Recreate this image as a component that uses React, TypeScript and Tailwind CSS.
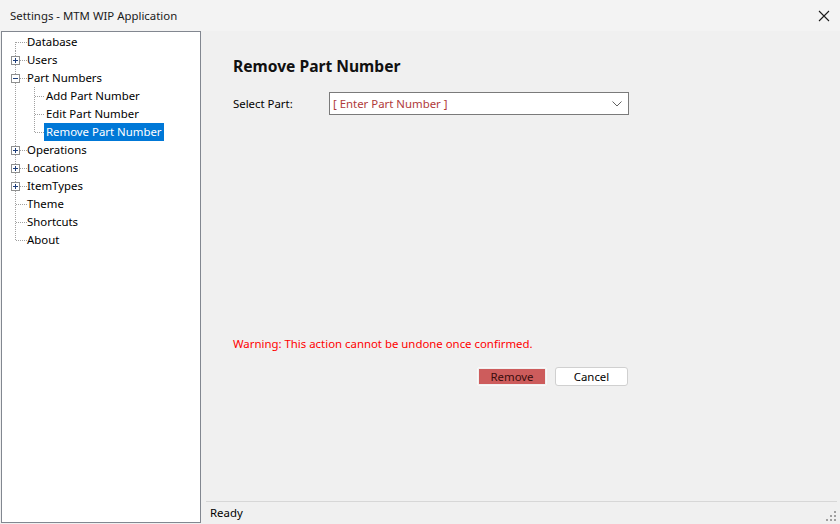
import React from "react";

type TreeNode = {
  label: string;
  level: 0 | 1;
  box?: "plus" | "minus";
  selected?: boolean;
  first?: boolean;
  last?: boolean;
  childLine?: "start" | "mid" | "end";
};

const nodes: TreeNode[] = [
  { label: "Database", level: 0, first: true },
  { label: "Users", level: 0, box: "plus" },
  { label: "Part Numbers", level: 0, box: "minus" },
  { label: "Add Part Number", level: 1, childLine: "start" },
  { label: "Edit Part Number", level: 1, childLine: "mid" },
  { label: "Remove Part Number", level: 1, childLine: "end", selected: true },
  { label: "Operations", level: 0, box: "plus" },
  { label: "Locations", level: 0, box: "plus" },
  { label: "ItemTypes", level: 0, box: "plus" },
  { label: "Theme", level: 0 },
  { label: "Shortcuts", level: 0 },
  { label: "About", level: 0, last: true },
];

const dot = { stroke: "#a0a0a0", strokeWidth: 1, strokeDasharray: "1 1" };

function Connector({ node }: { node: TreeNode }) {
  const width = node.level === 0 ? 25 : 42;
  return (
    <svg width={width} height={18} className="shrink-0">
      {/* level 0 trunk */}
      <line
        x1={13.5}
        x2={13.5}
        y1={node.first ? 9 : 0}
        y2={node.last ? 10 : 18}
        {...dot}
      />
      {node.level === 0 && (
        <line x1={14} x2={25} y1={9.5} y2={9.5} {...dot} />
      )}
      {node.level === 1 && (
        <>
          <line
            x1={32.5}
            x2={32.5}
            y1={0}
            y2={node.childLine === "end" ? 10 : 18}
            {...dot}
          />
          <line x1={33} x2={42} y1={9.5} y2={9.5} {...dot} />
        </>
      )}
      {node.box && (
        <g>
          <rect x={9.5} y={5.5} width={8} height={8} fill="#fff" stroke="#8e8f8f" />
          <line x1={11} x2={16} y1={9.5} y2={9.5} stroke="#1f3f7a" />
          {node.box === "plus" && (
            <line x1={13.5} x2={13.5} y1={7} y2={12} stroke="#1f3f7a" />
          )}
        </g>
      )}
    </svg>
  );
}

function TreeRow({ node }: { node: TreeNode }) {
  let cls = "h-[18px] leading-[18px] text-black";
  if (node.selected) cls = "px-[2px] h-[18px] leading-[18px] bg-[#0078d7] text-white";
  else if (node.level === 1) cls = "ml-[2px] h-[18px] leading-[18px] text-black";
  return (
    <div className="flex h-[18px] items-center">
      <Connector node={node} />
      <span className={cls}>{node.label}</span>
    </div>
  );
}

export default function App() {
  return (
    <div
      className="w-[840px] h-[524px] bg-[#f0f0f0] flex flex-col overflow-hidden text-[11.4px] text-black"
      style={{ fontFamily: '"Noto Sans", "Open Sans", sans-serif' }}
    >
      {/* title bar */}
      <div className="h-[31px] bg-[#f3f3f3] flex items-center justify-between shrink-0">
        <span className="pl-[10px] text-[#1a1a1a]">Settings - MTM WIP Application</span>
        <svg width={12} height={12} className="mr-[10px]">
          <path d="M1 1 L11 11 M11 1 L1 11" stroke="#1a1a1a" strokeWidth={1.1} />
        </svg>
      </div>

      <div className="flex flex-1 min-h-0">
        {/* settings tree */}
        <div className="ml-[1px] w-[200px] h-[492px] bg-white border border-[#828790] pt-[1px] shrink-0">
          {nodes.map((node) => (
            <TreeRow key={node.label} node={node} />
          ))}
        </div>

        <div className="flex flex-col flex-1 min-w-0">
          {/* remove part panel */}
          <div className="flex-1 pl-[32px] pt-[25px]">
            <h1 className="text-[15.6px] leading-[20px] font-bold text-[#111]">
              Remove Part Number
            </h1>

            <div className="mt-[16px] flex items-center h-[23px]">
              <span className="w-[96px]">Select Part:</span>
              <div className="w-[300px] h-[23px] bg-white border border-[#7a7a7a] flex items-center justify-between pl-[3px] pr-[6px]">
                <span className="text-[#b03a3a]">[ Enter Part Number ]</span>
                <svg width={10} height={6}>
                  <path d="M0.5 0.5 L5 5 L9.5 0.5" fill="none" stroke="#606060" />
                </svg>
              </div>
            </div>

            <p className="mt-[220px] leading-[17px] text-[#ff0000]">
              Warning: This action cannot be undone once confirmed.
            </p>

            <div className="mt-[15px] w-[395px] flex justify-end gap-[8px]">
              <div className="w-[70px] h-[19px] border border-[#f9f9f9] rounded-[2px] p-[1px]">
                <div className="h-full bg-[#cd5c5c] text-[#3a0d0d] flex items-center justify-center">
                  Remove
                </div>
              </div>
              <div className="w-[73px] h-[19px] bg-white border border-[#d0d0d0] rounded-[3px] flex items-center justify-center">
                Cancel
              </div>
            </div>
          </div>

          {/* status bar */}
          <div className="ml-[5px] mr-[3px] h-[23px] border-t border-[#d7d7d7] flex items-center justify-between shrink-0">
            <span className="pl-[4px]">Ready</span>
            <svg width={12} height={12} className="mt-[8px]">
              <rect x={9} y={0} width={2} height={2} fill="#a0a0a0" />
              <rect x={5} y={4} width={2} height={2} fill="#a0a0a0" />
              <rect x={9} y={4} width={2} height={2} fill="#a0a0a0" />
              <rect x={1} y={8} width={2} height={2} fill="#a0a0a0" />
              <rect x={5} y={8} width={2} height={2} fill="#a0a0a0" />
              <rect x={9} y={8} width={2} height={2} fill="#a0a0a0" />
            </svg>
          </div>
        </div>
      </div>
    </div>
  );
}
